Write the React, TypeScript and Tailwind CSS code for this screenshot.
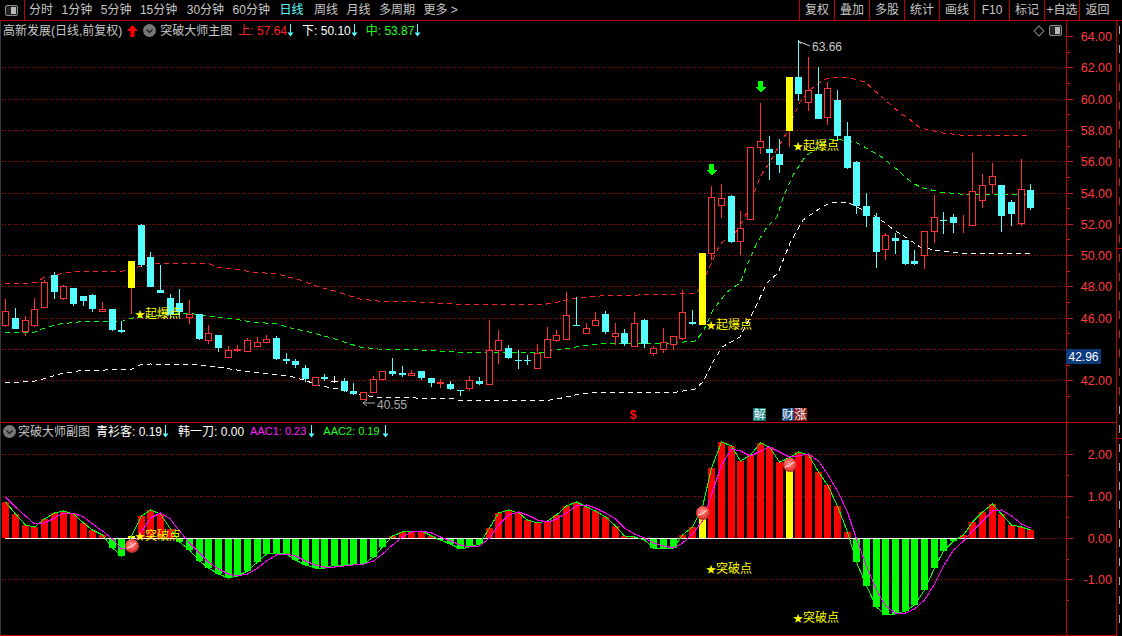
import React from 'react';

// candle rows: [bodyTop, bodyBottom, wickTop, wickBottom, kind] in page pixels
type Kind = 'r' | 'c' | 'y' | 'w';
type Candle = [number, number, number, number, Kind];

const candles: Candle[] = [
  [311, 326, 299, 327, 'r'], [318, 329, 308, 329, 'c'], [320, 332, 316, 336, 'r'], [309, 326, 298, 327, 'r'],
  [282, 308, 280, 308, 'r'], [275, 292, 272, 299, 'c'], [286, 299, 285, 300, 'r'], [288, 304, 288, 306, 'c'],
  [296, 301, 296, 306, 'c'], [295, 309, 294, 312, 'c'], [309, 312, 302, 312, 'r'], [309, 330, 309, 331, 'c'],
  [330, 332, 321, 333, 'c'], [261, 288, 261, 314, 'y'], [225, 265, 224, 267, 'c'], [257, 287, 252, 287, 'c'],
  [290, 293, 265, 293, 'c'], [298, 315, 294, 318, 'c'], [303, 312, 289, 316, 'c'], [314, 318, 300, 324, 'r'],
  [314, 339, 314, 340, 'c'], [333, 341, 325, 344, 'r'], [335, 348, 335, 352, 'c'], [350, 358, 346, 358, 'r'],
  [349, 351, 345, 352, 'r'], [340, 352, 338, 352, 'r'], [342, 347, 337, 347, 'r'], [339, 343, 335, 343, 'r'],
  [338, 359, 336, 360, 'c'], [359, 361, 353, 364, 'c'], [361, 365, 359, 368, 'c'], [368, 379, 365, 382, 'c'],
  [377, 386, 377, 386, 'r'], [377, 379, 374, 381, 'c'], [381, 382, 376, 383, 'w'], [381, 391, 378, 392, 'c'],
  [391, 394, 383, 395, 'c'], [392, 400, 392, 400, 'r'], [379, 393, 376, 393, 'r'], [371, 380, 371, 380, 'r'],
  [371, 374, 358, 376, 'c'], [373, 375, 366, 377, 'c'], [373, 376, 370, 376, 'r'], [371, 378, 371, 380, 'c'],
  [378, 383, 378, 387, 'c'], [382, 384, 379, 388, 'r'], [384, 389, 381, 390, 'c'], [390, 391, 390, 396, 'c'],
  [380, 389, 376, 391, 'r'], [381, 384, 377, 385, 'c'], [350, 385, 320, 385, 'r'], [340, 351, 330, 364, 'r'],
  [348, 358, 345, 359, 'c'], [360, 361, 350, 369, 'c'], [360, 361, 355, 365, 'c'], [353, 369, 344, 369, 'r'],
  [339, 358, 327, 358, 'r'], [335, 341, 330, 342, 'r'], [315, 340, 292, 340, 'r'], [325, 326, 297, 326, 'c'],
  [328, 334, 323, 334, 'r'], [320, 326, 312, 326, 'r'], [314, 332, 311, 334, 'c'], [333, 337, 323, 345, 'r'],
  [333, 344, 329, 346, 'c'], [323, 347, 312, 347, 'r'], [320, 344, 319, 348, 'c'], [348, 354, 346, 356, 'r'],
  [342, 350, 328, 353, 'r'], [336, 345, 336, 350, 'r'], [312, 339, 290, 340, 'r'], [322, 324, 310, 325, 'c'],
  [253, 325, 253, 325, 'y'], [197, 254, 186, 260, 'r'], [198, 206, 184, 218, 'r'], [196, 242, 195, 243, 'c'],
  [228, 242, 211, 255, 'r'], [147, 220, 147, 220, 'r'], [141, 148, 103, 154, 'r'], [149, 153, 136, 180, 'c'],
  [154, 165, 139, 173, 'c'], [77, 131, 77, 147, 'y'], [77, 94, 40, 101, 'c'], [90, 103, 57, 111, 'r'],
  [94, 119, 67, 119, 'c'], [88, 118, 82, 125, 'r'], [100, 136, 90, 141, 'c'], [136, 168, 122, 169, 'c'],
  [162, 206, 161, 214, 'c'], [206, 216, 193, 227, 'c'], [217, 252, 213, 268, 'c'], [235, 250, 233, 260, 'r'],
  [238, 241, 233, 254, 'c'], [240, 264, 240, 265, 'c'], [261, 264, 250, 265, 'c'], [231, 256, 231, 269, 'r'],
  [217, 232, 195, 243, 'r'], [220, 221, 212, 234, 'c'], [217, 223, 214, 233, 'c'], [225, 226, 215, 233, 'r'],
  [191, 226, 153, 226, 'r'], [185, 201, 174, 208, 'r'], [176, 185, 163, 194, 'r'], [185, 216, 185, 232, 'c'],
  [202, 214, 200, 226, 'c'], [189, 224, 159, 226, 'r'], [190, 208, 184, 210, 'c'],
];

// histogram end of each bar, zero line sits at y=538
const bars = [
  502, 514, 525, 527, 519, 513, 511, 514, 523, 530, 535, 548, 556, 536, 516, 510, 514, 529, 542, 550, 561, 568, 574,
  578, 576, 571, 562, 554, 553, 554, 560, 565, 568, 568, 565, 565, 564, 564, 557, 547, 536, 532, 531, 531, 536, 540,
  544, 549, 547, 544, 528, 513, 510, 513, 520, 523, 521, 515, 506, 502, 507, 511, 517, 526, 536, 537, 540, 548, 548,
  548, 535, 527, 507, 468, 442, 446, 461, 455, 443, 447, 462, 458, 452, 455, 472, 485, 506, 532, 562, 586, 607, 615,
  614, 611, 605, 590, 568, 551, 541, 535, 522, 512, 504, 514, 525, 527, 530,
];

const upper =
  '5,284 30,283 37,282 43,278 50,277 60,274 78,271 123,271 128,269 157,263 193,263 210,264 217,267 233,269 253,272 277,274 300,280 313,285 323,288 335,291 347,295 360,299 378,301 417,302 437,303 455,304 540,305 553,303 577,298 600,296 677,294 697,293 707,273 720,244 735,233 745,217 753,197 760,177 770,162 787,132 800,102 810,90 823,80 833,77 847,77 865,82 882,97 900,113 908,118 920,128 930,130 943,133 960,135 1030,135';
const middle =
  '5,333 35,332 42,329 48,327 60,324 78,322 123,321 127,319 133,318 185,313 203,315 217,317 233,319 253,322 277,324 287,327 300,330 313,333 335,339 347,343 360,347 378,349 420,350 455,352 540,353 557,350 583,346 600,344 673,343 695,341 703,332 713,310 727,292 740,283 748,263 757,243 767,227 777,217 783,198 793,175 805,157 827,140 837,139 857,143 870,150 883,158 900,172 912,183 923,188 940,192 960,194 1030,194';
const lower =
  '5,383 35,381 43,379 60,374 78,371 132,369 140,365 150,364 200,365 217,367 250,372 290,376 307,381 317,385 343,390 360,395 377,397 455,399 457,400 550,400 557,399 580,394 600,392 677,392 695,389 703,382 713,362 722,347 740,337 753,312 767,283 778,273 790,243 803,220 822,207 833,202 847,202 863,210 877,217 897,232 907,238 920,247 940,251 960,253 1030,253';

const barX = (i: number) => Math.round(5.3 + 9.67 * i);

const aac2 = bars.map((y, i) => `${barX(i) + 0.5},${y}`).join(' ');
// the magenta line lags the bars by a little under one step
const aac1 = bars
  .map((_, i) => {
    const a = bars[Math.max(i - 2, 0)];
    const b = bars[Math.max(i - 1, 0)];
    const y = i === 0 ? 497 : 0.2 * a + 0.4 * b + 0.4 * bars[i];
    return `${barX(i) + 0.5},${Math.round(y)}`;
  })
  .join(' ');

const mainPrices = [64, 62, 60, 58, 56, 54, 52, 50, 48, 46, 42];
const priceY = (p: number) => Math.round(380.3 - (p - 42) * 15.65);
const menu = [
  { label: '分时', cls: '' },
  { label: '1分钟', cls: '' },
  { label: '5分钟', cls: '' },
  { label: '15分钟', cls: '' },
  { label: '30分钟', cls: 'ml-px' },
  { label: '60分钟', cls: '' },
  { label: '日线', cls: 'ml-px text-[#55ffff]' },
  { label: '周线', cls: 'ml-[2px]' },
  { label: '月线', cls: '' },
  { label: '多周期', cls: '' },
];
const tools = ['复权', '叠加', '多股', '统计', '画线', 'F10', '标记', '+自选'];

function PanelToggle() {
  return (
    <svg width="13" height="11" viewBox="0 0 13 11">
      <rect x="0.5" y="0.5" width="12" height="10" rx="1.5" fill="#222" stroke="#8a8a8a" />
      <rect x="6" y="2" width="5" height="7" fill="#b8b8b8" />
    </svg>
  );
}

function DownArrow() {
  return (
    <svg width="7" height="13" viewBox="0 0 7 13">
      <path d="M3.5 0V9" stroke="#55ffff" strokeWidth="1" />
      <path d="M0.5 8.5H6.5L3.5 12.5Z" fill="#55ffff" />
    </svg>
  );
}

function CircleChevron() {
  return (
    <svg width="13" height="13" viewBox="0 0 13 13">
      <circle cx="6.5" cy="6.5" r="6.5" fill="#777" />
      <path d="M3.5 5.5L6.5 8.5L9.5 5.5" fill="none" stroke="#222" strokeWidth="1.5" />
    </svg>
  );
}

function Label({ x, y, text }: { x: number; y: number; text: string }) {
  return (
    <text x={x} y={y} fontSize="12" fill="#ffff00">
      <tspan fontSize="10">★</tspan>
      {text}
    </text>
  );
}

function GreenArrow({ x, y }: { x: number; y: number }) {
  return <path d={`M${x - 2} ${y}h5v6h3l-5.5 5.5l-5.5 -5.5h3z`} fill="#00ff00" />;
}

function Ball({ x, y }: { x: number; y: number }) {
  return (
    <g>
      <circle cx={x} cy={y} r="7" fill="url(#ball)" />
      <path d={`M${x - 5} ${y + 2}Q${x} ${y + 1} ${x + 4} ${y - 3}`} fill="none" stroke="#ffc8c0" strokeWidth="1.5" />
    </g>
  );
}

function CandleMark({ c, i }: { c: Candle; i: number }) {
  const [top, bottom, wickTop, wickBottom, kind] = c;
  const x = barX(i);
  const wick = kind === 'c' ? '#55ffff' : kind === 'w' ? '#ffffff' : '#ff3232';
  return (
    <g>
      <rect x={x} y={wickTop} width="1" height={wickBottom - wickTop} fill={wick} />
      {kind === 'r' && (
        <rect x={x - 2.5} y={top + 0.5} width="6" height={bottom - top - 1} fill="#000" stroke="#ff3232" />
      )}
      {kind === 'c' && <rect x={x - 3} y={top} width="7" height={bottom - top} fill="#55ffff" />}
      {kind === 'y' && <rect x={x - 3} y={top} width="7" height={bottom - top} fill="#ffff00" />}
      {kind === 'w' && <rect x={x - 3} y={top} width="7" height="1" fill="#ffffff" />}
    </g>
  );
}

function MainChart() {
  return (
    <svg width="1066" height="401" viewBox="0 21 1066 401" className="block" shapeRendering="crispEdges">
      {mainPrices.slice(1).map((p) => (
        <line key={p} x1="2" x2="1066" y1={priceY(p) + 0.5} y2={priceY(p) + 0.5} stroke="#c00000" strokeDasharray="1 2" />
      ))}
      <line x1="2" x2="1066" y1="349.5" y2="349.5" stroke="#c00000" strokeDasharray="1 2" />
      <polyline points={upper} fill="none" stroke="#ff2020" strokeDasharray="5 4" />
      <polyline points={middle} fill="none" stroke="#00ff00" strokeDasharray="5 4" />
      <polyline points={lower} fill="none" stroke="#ffffff" strokeDasharray="5 4" />
      {candles.map((c, i) => (
        <CandleMark key={i} c={c} i={i} />
      ))}
      <GreenArrow x={711} y={164} />
      <GreenArrow x={760} y={81} />
      <g shapeRendering="auto">
        <Label x={135} y={318} text="起爆点" />
        <Label x={706} y={329} text="起爆点" />
        <Label x={793} y={150} text="起爆点" />
        <path d="M799 41.5L801 44M799 41.5L810 46" stroke="#cccccc" fill="none" />
        <text x="812" y="51" fontSize="12" fill="#c8c8c8">63.66</text>
        <path d="M363 403H375M363 403L367 400M363 403L367 406" stroke="#aaaaaa" fill="none" />
        <text x="377" y="409" fontSize="12" fill="#aaaaaa">40.55</text>
        <text x="633" y="419" fontSize="12" fontWeight="700" textAnchor="middle" fill="#ff1010">$</text>
      </g>
    </svg>
  );
}

function SubChart() {
  return (
    <svg width="1066" height="212" viewBox="0 423 1066 212" className="block" shapeRendering="crispEdges">
      <defs>
        <radialGradient id="ball" cx="45%" cy="40%" r="65%">
          <stop offset="0%" stopColor="#ff9c94" />
          <stop offset="65%" stopColor="#e8403c" />
          <stop offset="100%" stopColor="#a02020" />
        </radialGradient>
      </defs>
      {[454, 496, 579].map((y) => (
        <line key={y} x1="2" x2="1066" y1={y + 0.5} y2={y + 0.5} stroke="#c00000" strokeDasharray="1 2" />
      ))}
      <line x1="1034" x2="1066" y1="538.5" y2="538.5" stroke="#c00000" strokeDasharray="1 2" />
      {bars.map((y, i) => {
        const yellow = i === 13 || i === 72 || i === 81;
        const fill = yellow ? '#ffff00' : y < 538 ? '#ff0000' : '#00ff00';
        return (
          <rect key={i} x={barX(i) - 3} y={Math.min(y, 538)} width="7" height={Math.abs(538 - y)} fill={fill} />
        );
      })}
      <rect x="5" y="538" width="1029" height="1" fill="#ffffff" />
      <polyline points={aac2} fill="none" stroke="#00ff00" />
      <polyline points={aac1} fill="none" stroke="#ff00ff" />
      <g shapeRendering="auto">
        <Ball x={132} y={546} />
        <Ball x={703} y={513} />
        <Ball x={790} y={465} />
        <Label x={135} y={540} text="突破点" />
        <Label x={706} y={573} text="突破点" />
        <Label x={793} y={622} text="突破点" />
      </g>
    </svg>
  );
}

function MainAxis() {
  const minor = Array.from({ length: 24 }, (_, i) => 41 + i);
  return (
    <svg width="50" height="401" viewBox="1066 21 50 401" className="block" shapeRendering="crispEdges">
      {minor.map((p) => {
        const y = priceY(p) + 0.5;
        return <line key={p} x1="1066" x2={p % 2 === 0 ? 1072 : 1069} y1={y} y2={y} stroke="#c02020" />;
      })}
      <g shapeRendering="auto" fontSize="12.5" fill="#ff3c3c" textAnchor="end">
        {mainPrices.map((p) => (
          <text key={p} x="1111" y={priceY(p) + 5}>{p.toFixed(2)}</text>
        ))}
      </g>
    </svg>
  );
}

function SubAxis() {
  const rows: [number, string][] = [[454, '2.00'], [496, '1.00'], [538, '0.00'], [579, '-1.00']];
  return (
    <svg width="50" height="212" viewBox="1066 423 50 212" className="block" shapeRendering="crispEdges">
      {rows.map(([y]) => (
        <line key={y} x1="1066" x2="1072" y1={y + 0.5} y2={y + 0.5} stroke="#c02020" />
      ))}
      {[475, 517, 559, 600].map((y) => (
        <line key={y} x1="1066" x2="1068" y1={y + 0.5} y2={y + 0.5} stroke="#c02020" />
      ))}
      <g shapeRendering="auto" fontSize="12.5" fill="#ff3c3c" textAnchor="end">
        {rows.map(([y, t]) => (
          <text key={t} x="1111" y={y + 5}>{t}</text>
        ))}
      </g>
    </svg>
  );
}

export default function App() {
  return (
    <div className="flex h-[636px] w-[1122px] flex-col overflow-hidden bg-black text-[12px] text-[#c8c8c8] [font-family:'Liberation_Sans','Noto_Sans_CJK_SC',sans-serif]">
      {/* toolbar */}
      <div className="flex h-[21px] shrink-0 items-center border-b border-[#c00000]">
        <div className="flex h-full w-[25px] items-center justify-center border-r border-[#c00000] pr-px">
          <PanelToggle />
        </div>
        <div className="flex items-center gap-[8.5px] pl-1">
          {menu.map((m) => (
            <span key={m.label} className={m.cls}>
              {m.label}
            </span>
          ))}
          <span>更多 &gt;</span>
        </div>
        <div className="ml-auto flex h-full">
          {tools.map((t) => (
            <div key={t} className="flex h-full w-[35px] items-center justify-center border-l border-[#c00000]">
              {t}
            </div>
          ))}
          <div className="flex h-full w-[43px] items-center justify-center border-l border-[#c00000] pr-[7px]">返回</div>
        </div>
      </div>

      <div className="flex min-h-0 flex-1">
        <div className="flex w-[1116px] flex-col border-l border-[#3a3a3a]">
          {/* main pane */}
          <div className="flex h-[402px] -ml-px border-b border-[#c00000]">
            <div className="relative w-[1066px]">
              <MainChart />
              <div className="absolute left-[3px] top-[1px] flex h-[17px] items-center">
                <span>高新发展(日线,前复权)</span>
                <svg width="11" height="12" viewBox="0 0 11 12" className="ml-[5px]">
                  <path d="M5.5 0L11 6H7.5V12H3.5V6H0Z" fill="#ff0000" />
                </svg>
                <span className="ml-[5px] flex"><CircleChevron /></span>
                <span className="ml-[4px]">突破大师主图</span>
                <span className="ml-[6px] text-[#ff2020]">上: 57.64</span>
                <DownArrow />
                <span className="ml-[8px] text-white">下: 50.10</span>
                <DownArrow />
                <span className="ml-[8px] text-[#20ff20]">中: 53.87</span>
                <DownArrow />
              </div>
              <div className="absolute right-[4px] top-[4px] flex items-center gap-[6px]">
                <span className="block h-2 w-2 rotate-45 border border-[#888]" />
                <PanelToggle />
              </div>
              <div className="absolute left-[753px] top-[387px] flex h-[13px] w-[13px] items-center justify-center bg-[#0a7878] text-white">解</div>
              <div className="absolute left-[782px] top-[387px] flex">
                <span className="flex h-[13px] w-[12px] items-center justify-center bg-[#1a4a80] text-white">财</span>
                <span className="flex h-[13px] w-[13px] items-center justify-center bg-[#8a1a1a] text-white">涨</span>
              </div>
            </div>
            <div className="relative w-[50px] border-l border-[#c00000]">
              <MainAxis />
              <div className="absolute -left-px top-[328px] flex h-[15px] w-[35px] items-center justify-center bg-[#0c3a7c] text-white">42.96</div>
            </div>
          </div>

          {/* sub pane */}
          <div className="flex h-[213px] -ml-px border-b border-[#c00000]">
            <div className="relative w-[1066px]">
              <SubChart />
              <div className="absolute left-[3px] top-0 flex h-[17px] items-center">
                <CircleChevron />
                <span className="ml-[2px]">突破大师副图</span>
                <span className="ml-[6px] text-white">青衫客: 0.19</span>
                <DownArrow />
                <span className="ml-[9px] text-white">韩一刀: 0.00</span>
                <span className="ml-[6px] text-[11px] text-[#ff20ff]">AAC1: 0.23</span>
                <span className="ml-[2px] flex"><DownArrow /></span>
                <span className="ml-[8px] text-[11px] text-[#20ff20]">AAC2: 0.19</span>
                <span className="ml-[2px] flex"><DownArrow /></span>
              </div>
            </div>
            <div className="w-[50px] border-l border-[#c00000]">
              <SubAxis />
            </div>
          </div>
        </div>

        {/* sliver of the neighbouring column, only the first strokes show */}
        <div className="flex w-[6px] flex-col overflow-hidden border-l border-[#c00000]">
          {Array.from({ length: 32 }, (_, i) => (
            <div
              key={i}
              className={`h-[19px] shrink-0 pl-[2px] pt-[5px] ${i === 11 || i === 21 ? 'border-b border-[#c00000]' : ''}`}
            >
              <div className={`h-[8px] w-px ${i >= 2 && i < 20 ? 'bg-[#b03030]' : 'bg-[#a8a8a8]'}`} />
            </div>
          ))}
        </div>
      </div>
    </div>
  );
}
